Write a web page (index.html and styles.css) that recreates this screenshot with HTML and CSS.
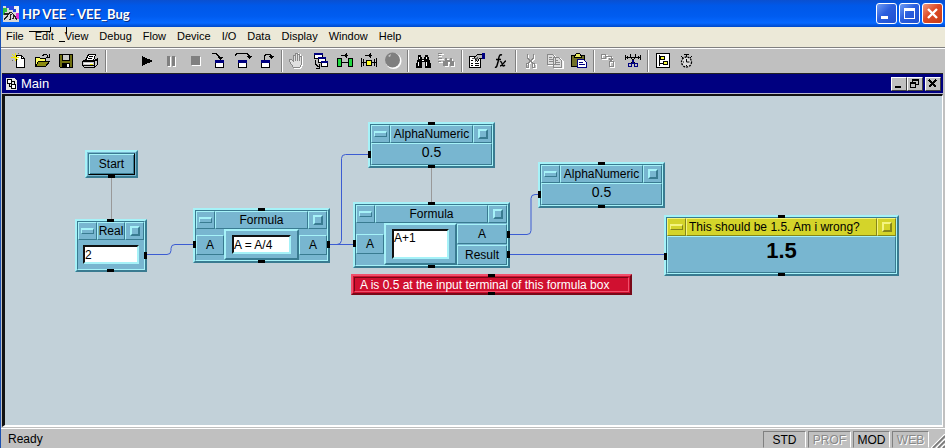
FILE: index.html
```html
<!DOCTYPE html>
<html lang="en">
<head>
<meta charset="utf-8">
<title>HP VEE - VEE_Bug</title>
<link rel="stylesheet" href="styles.css">
</head>
<body>
<div class="app">
  <header class="titlebar">
    <svg class="app-icon" width="16" height="16" viewBox="0 0 16 16" shape-rendering="crispEdges" aria-hidden="true">
      <path fill="#d8d8d8" d="M0 0h16v16H0z"/><path fill="#30c040" d="M0 2h4v4H2v3H0z"/><path fill="#2848e0" d="M3 0h8v3h2v3h-3V4H6V2H3z"/><path fill="#f0f0f0" d="M11 0h5v7h-3V3h-2z"/><path fill="#e030d0" d="M13 7h3v6h-3z"/>
      <path fill="none" stroke="#222" stroke-width="1.2" d="M1 14l4-5 3-3 3 3 3 5M1 8h4l3-2M8 8l-1 6M11 9l-1 4"/>
    </svg>
    <h1>HP VEE - VEE_Bug</h1>
    <div class="window-buttons">
      <button type="button" aria-label="Minimize"><svg width="17" height="17" viewBox="0 0 17 17"><path fill="#fff" d="M3 11h7v3H3z"/></svg></button>
      <button type="button" aria-label="Maximize"><svg width="17" height="17" viewBox="0 0 17 17"><path fill="#fff" fill-rule="evenodd" d="M3 3h11v11H3zM4 6v7h9V6z"/></svg></button>
      <button type="button" class="close" aria-label="Close"><svg width="17" height="17" viewBox="0 0 17 17"><path stroke="#fff" stroke-width="2.4" d="M4 4l9 9M13 4l-9 9"/></svg></button>
    </div>
  </header>

  <nav class="menu">
    <a href="#">File</a><a href="#">Edit</a><a href="#">View</a><a href="#">Debug</a><a href="#">Flow</a><a href="#">Device</a><a href="#">I/O</a><a href="#">Data</a><a href="#">Display</a><a href="#">Window</a><a href="#">Help</a>
    <svg class="menu-marks" width="40" height="16" viewBox="0 0 40 16" shape-rendering="crispEdges" aria-hidden="true"><path fill="none" stroke="#000" d="M0 4.500h21M21.500 0v5M30 14.500h6M37.500 0v7"/></svg>
  </nav>

  <div class="toolbar" role="toolbar" aria-label="Main tools">
    <div class="group">
      <button type="button" aria-label="New"><svg viewBox="0 0 18 18"><path fill="#fff" stroke="#000" d="M7.500 3.500h5l3 3v9h-8z"/><path fill="none" stroke="#000" d="M12.500 3.500v3h3"/><path stroke="#f0e800" d="M6.500 1v8M2 5.500h8M3 2l6 6"/><path stroke="#666" d="M4 8l-1 1M9 2l1-1"/></svg></button>
      <button type="button" aria-label="Open"><svg viewBox="0 0 18 18"><path fill="#ffff60" stroke="#000" d="M2.500 14.500v-9h4l1 1h5v3"/><path fill="#8a8a10" stroke="#000" d="M2.500 14.500l3-5h11l-4 5z"/><path fill="none" stroke="#000" d="M9.500 4.500l1-2h3l2 3M16.500 2v4M13 5.500h3"/></svg></button>
      <button type="button" aria-label="Save"><svg viewBox="0 0 18 18"><path fill="#707010" stroke="#000" d="M2.500 2.500h13v13h-12l-1-1z"/><path fill="#c8c8c8" stroke="#000" d="M5.500 2.500h7v6h-7z"/><path fill="#000" d="M5 11h8v5H5z"/><path fill="#fff" d="M10 12h2v3h-2z"/></svg></button>
      <button type="button" aria-label="Print"><svg viewBox="0 0 18 18"><path fill="#fff" stroke="#000" d="M4.500 8.500l3-6h7l-2 6z"/><path stroke="#000" d="M8 4.500h4M7 6.500h4"/><path fill="#c8c8c8" stroke="#000" d="M1.500 9.500l2-1h10l3-2v6l-3 3h-10l-2-2zM1.500 9.500h12v5M13.500 9.500l3-2"/><path fill="#fff" d="M3 11h9v1H3z"/><path fill="#e0d800" d="M9 12h3v1H9z"/><path stroke="#000" d="M2 13.500h11"/></svg></button>
    </div>
    <i class="sep first"></i>
    <div class="group">
      <button type="button" aria-label="Run"><svg viewBox="0 0 18 18"><path fill="#000" d="M4 4v10l11-5z"/></svg></button>
      <button type="button" aria-label="Pause"><svg viewBox="0 0 18 18"><path fill="#fff" d="M6 5h3v10H6zM11 5h3v10h-3z"/><path fill="#808080" d="M5 4h3v10H5zM10 4h3v10h-3z"/></svg></button>
      <button type="button" aria-label="Stop"><svg viewBox="0 0 18 18"><path fill="#fff" d="M6 5h9v9H6z"/><path fill="#808080" d="M5 4h9v9H5z"/></svg></button>
      <button type="button" aria-label="Step into"><svg viewBox="0 0 18 18"><path fill="none" stroke="#000" d="M2 1.500h4l4 4v1"/><path fill="#000" d="M7 5h6l-3 3z"/><path fill="#fff" stroke="#000" d="M5.500 8.500h8v7h-8z"/><path fill="#000080" d="M5 8h9v3H5z"/></svg></button>
      <button type="button" aria-label="Step over"><svg viewBox="0 0 18 18"><path fill="none" stroke="#000" d="M1 3.500l2-2h10l2 2v2"/><path fill="#000" d="M12 4h6l-3 3z"/><path fill="#fff" stroke="#000" d="M4.500 8.500h8v7h-8z"/><path fill="#000080" d="M4 8h9v3H4z"/></svg></button>
      <button type="button" aria-label="Step out"><svg viewBox="0 0 18 18"><path fill="none" stroke="#000" d="M6.500 8v-4l2-2h3l2 2v2"/><path fill="#000" d="M10 4h7l-3.500 3z"/><path fill="#fff" stroke="#000" d="M3.500 8.500h8v7h-8z"/><path fill="#000080" d="M3 8h9v3H3z"/></svg></button>
    </div>
    <i class="sep"></i>
    <div class="group">
      <button type="button" aria-label="Pan"><svg viewBox="0 0 18 18"><path fill="#e8e8e8" stroke="#fff" d="M6.500 16.500l-4-6v-2h2l2 2v-7h2v-2h2v1h2v2h2v8l-2 4z"/><path fill="#e0e0e0" stroke="#888" d="M5.500 15.500l-4-6v-2h2l2 2v-6h2v-2h2v1h2v2h2v8l-2 3zM7.500 3v6M9.500 2v7M11.500 4v5"/></svg></button>
      <button type="button" aria-label="Show windows"><svg viewBox="0 0 18 18"><path fill="#fff" stroke="#000" d="M2.500 1.500h8v5h-8zM6.500 5.500h7v5h-7zM9.500 9.500h6v5h-6z"/><path fill="#000080" d="M2 1h9v2H2zM6 5h8v2H6zM9 9h7v2H9z"/><path fill="none" stroke="#000" d="M3.500 8v4l3 3M7.500 12v4H4"/></svg></button>
      <button type="button" aria-label="Data flow"><svg viewBox="0 0 18 18"><path fill="#20d840" stroke="#000" d="M1.500 6.500h4v8h-4zM12.500 6.500h4v8h-4z"/><path stroke="#000" d="M6 10.500h6M5 3.500h7M10.500 1v5M9.500 2v3"/></svg></button>
      <button type="button" aria-label="Execution flow"><svg viewBox="0 0 18 18"><path fill="none" stroke="#000" d="M1.500 6v9M16.500 6v9M1 10.500h2M15 10.500h2M3.500 7v7M14.500 7v7M4 10.500h10"/><path fill="#ffff20" stroke="#000" d="M6.500 8.500h5v5h-5z"/><path stroke="#000" d="M5 3.500h7M10.500 1v5M9.500 2v3"/></svg></button>
      <button type="button" aria-label="Profiler"><svg class="smooth" viewBox="0 0 18 18"><circle cx="9.500" cy="9" r="8" fill="#fff"/><circle cx="8.500" cy="8" r="7.500" fill="#808080"/><path fill="#ccc" d="M4 4l3-2-1 3z"/></svg></button>
    </div>
    <i class="sep"></i>
    <div class="group">
      <button type="button" aria-label="Find"><svg viewBox="0 0 18 18"><path fill="#000" d="M4 3h3v2h1v2h2V5h1V3h3v2h1v3h1v3h1v5h-6v-6H8v6H2v-5h1V8h1z"/><path fill="#fff" d="M5 5h1v2H5zM12 5h1v2h-1zM4 10h1v4H4zM12 10h1v4h-1zM8 8h2v1H8z"/></svg></button>
      <button type="button" aria-label="Find results"><svg viewBox="0 0 18 18"><path fill="none" stroke="#fff" d="M1 2.500h5M1 4.500h3M1 7.500h5M1 10.500h4"/><path fill="#fff" d="M8 7h3v2h1V7h3v3h2v5h-4v-3h-2v3H7v-4z"/><path stroke="#888" d="M0 1.500h4M0 3.500h3M0 6.500h4M0 9.500h3"/><path fill="#888" d="M7 6h2v2h3V6h2v3h2v5h-4v-4h-2v4H5V9h2z"/></svg></button>
    </div>
    <i class="sep"></i>
    <div class="group">
      <button type="button" aria-label="Properties"><svg viewBox="0 0 18 18"><path fill="#fff" stroke="#000" d="M1.500 4.500h11v11h-11z"/><path stroke="#000" d="M3 8.500h2M3 11.500h2M3 13.500h2M7 11.500h4M7 13.500h4"/><path fill="#b8b8b8" stroke="#000" d="M6.500 5.500l3-3h5v4h-3l-2 3z"/><path stroke="#555" d="M4 6.500h6M7 9.500l3-4"/><path fill="#000080" d="M14 1h3v6h-3z"/></svg></button>
      <button type="button" aria-label="Function browser"><svg class="smooth" viewBox="0 0 18 18"><path fill="none" stroke="#000" stroke-width="1.500" d="M3 15c2 1 2-2 3-5 1-5 1-8 4-7M4 7.500h5"/><path fill="none" stroke="#000" stroke-width="1.300" d="M8 10c2-2 2 4 3 4s1 0 2-1M14 9c-2 0-3 5-6 5"/></svg></button>
    </div>
    <i class="sep"></i>
    <div class="group">
      <button type="button" aria-label="Cut"><svg viewBox="0 0 18 18"><path fill="none" stroke="#fff" d="M6.500 3v4l5 5M12.500 3v4l-5 5M4.500 12.500h3v4h-3zM11.500 12.500h3v4h-3z"/><path fill="none" stroke="#888" d="M5.500 2v4l5 5M11.500 2v4l-5 5M4.500 11.500h2v4h-2zM10.500 11.500h2v4h-2z"/></svg></button>
      <button type="button" aria-label="Copy"><svg viewBox="0 0 18 18"><path fill="#eee" stroke="#fff" d="M2.500 3.500h6l3 3v7h-9zM8.500 6.500h6l3 3v7h-9z"/><path fill="#ddd" stroke="#888" d="M1.500 2.500h5l3 3v7h-8zM7.500 5.500h5l3 3v7h-8z"/><path stroke="#888" d="M3 5.500h3M3 7.500h4M3 9.500h4M9 8.500h3M9 10.500h5M9 12.500h5"/></svg></button>
      <button type="button" aria-label="Paste"><svg viewBox="0 0 18 18"><path fill="#707028" stroke="#000" d="M1.500 3.500h13v11h-13z"/><path fill="#e8e860" stroke="#000" d="M4.500 4.500l2-3h3l2 3v1h-7z"/><path fill="#fff" stroke="#000080" d="M7.500 7.500h6l3 3v5h-9z"/><path stroke="#000080" d="M9 10.500h4M9 12.500h6"/></svg></button>
    </div>
    <i class="sep"></i>
    <div class="group">
      <button type="button" aria-label="Connect"><svg viewBox="0 0 18 18"><path fill="none" stroke="#fff" d="M2.500 3.500h5v4h-5zM10.500 10.500h4v5h-4zM8 5.500h4v4"/><path fill="none" stroke="#888" d="M1.500 2.500h4v4h-4zM9.500 9.500h4v5h-4zM6 4.500h5.500v4M9 6.500l2 2 2-2"/></svg></button>
      <button type="button" aria-label="Delete line"><svg viewBox="0 0 18 18"><path fill="none" stroke="#000" d="M1 5.500h16M1.500 3v5M16.500 3v5M3.500 4v3M14.500 4v3M6.500 2v3l4 6M11.500 2v3l-4 6"/><path fill="none" stroke="#000080" stroke-width="1.400" d="M4.500 11.500h3v3h-3zM10.500 11.500h3v3h-3zM9 8v4"/></svg></button>
    </div>
    <i class="sep"></i>
    <div class="group">
      <button type="button" aria-label="Program explorer"><svg viewBox="0 0 18 18"><path fill="#fff" stroke="#000" d="M2.500 1.500h13v14h-13z"/><path fill="none" stroke="#000" d="M5.500 3v10.500M5 6.500h3M5 11.500h4"/><path fill="#ffff40" stroke="#000" d="M6.500 4.500h4v3h-4zM9.500 9.500h4v3h-4z"/></svg></button>
      <button type="button" aria-label="Timer"><svg class="smooth" viewBox="0 0 18 18"><circle cx="8.500" cy="10" r="5" fill="#ddd" stroke="#000" stroke-width="1.300" stroke-dasharray="2 1"/><path fill="none" stroke="#000" d="M6 2.500h5M8.500 2v3M3 4l2 2M14 4l-2 2M8.500 7v3h3M5 10h1M8.500 13v1"/></svg></button>
    </div>
  </div>

  <main class="mdi">
    <div class="mdi-title">
      <svg width="12" height="14" viewBox="0 0 12 14" shape-rendering="crispEdges" aria-hidden="true"><path fill="#e4e4e4" d="M0 1h8l3 3v9H0z"/><path fill="#fff" stroke="#000" d="M1.500 2.500h4v4h-4zM5.500 7.500h4v4h-4z"/><path fill="none" stroke="#000" d="M6 4.500h2.500V7M3.500 7v2.500H5"/></svg>
      <h2>Main</h2>
      <div class="mdi-buttons">
        <button type="button" aria-label="Minimize Main"><svg viewBox="0 0 13 12"><path fill="#000" d="M3 8h6v2H3z"/></svg></button>
        <button type="button" aria-label="Restore Main"><svg viewBox="0 0 13 12"><path fill="none" stroke="#000" d="M4.500 4V1.500h6v5H8M2.500 5.500h5v4h-5z"/><path fill="#000" d="M4 1h7v2H4zM2 4h6v2H2z"/></svg></button>
        <button type="button" class="apart" aria-label="Close Main"><svg viewBox="0 0 13 12"><path stroke="#000" stroke-width="1.600" d="M3 2l7 7M10 2l-7 7"/></svg></button>
      </div>
    </div>

    <div class="canvas">
      <svg class="wires" width="900" height="300" viewBox="5 96 900 300" aria-hidden="true">
        <path class="control" d="M111.500 176v45M431.500 166v38"/>
        <path class="data" d="M147 254.500h20q4 0 4-4v-2q0-4 4-4h18M330 244.500h24M334 244.500h3q4 0 4.500-4v-82q0-4 4-4h23M510 234.500h17q4 0 4-4v-32q0-4 4-4h4M510 254.500h155"/>
      </svg>

      <section class="node start"><button type="button">Start</button><i class="pin bottom"></i></section>

      <section class="node real">
        <div class="frame">
          <header><button type="button" class="min" aria-label="Object menu"></button><h3>Real</h3><button type="button" class="max" aria-label="Minimize Real"></button></header>
          <div class="body"><input type="text" value="2" aria-label="Real value"></div>
        </div>
        <i class="pin top"></i><i class="pin bottom"></i><i class="pin right low"></i>
      </section>

      <section class="node formula one">
        <div class="frame">
          <header><button type="button" class="min" aria-label="Object menu"></button><h3>Formula</h3><button type="button" class="max" aria-label="Minimize Formula"></button></header>
          <div class="body">
            <div class="terms"><span>A</span></div>
            <div class="panel"><input type="text" value="A = A/4" aria-label="Formula"></div>
            <div class="terms"><span>A</span></div>
          </div>
        </div>
        <i class="pin top"></i><i class="pin bottom"></i><i class="pin left low"></i><i class="pin right low"></i>
      </section>

      <section class="node alpha first">
        <div class="frame">
          <header><button type="button" class="min" aria-label="Object menu"></button><h3>AlphaNumeric</h3><button type="button" class="max" aria-label="Minimize display"></button></header>
          <div class="body"><output>0.5</output></div>
        </div>
        <i class="pin top"></i><i class="pin bottom"></i><i class="pin left"></i>
      </section>

      <section class="node formula two">
        <div class="frame">
          <header><button type="button" class="min" aria-label="Object menu"></button><h3>Formula</h3><button type="button" class="max" aria-label="Minimize Formula"></button></header>
          <div class="body">
            <div class="terms"><span>A</span></div>
            <div class="panel"><textarea aria-label="Formula">A+1</textarea></div>
            <div class="terms outputs"><span>A</span><span>Result</span></div>
          </div>
        </div>
        <i class="pin top"></i><i class="pin bottom"></i><i class="pin left mid"></i><i class="pin right"></i><i class="pin right lower"></i>
      </section>

      <section class="node alpha second">
        <div class="frame">
          <header><button type="button" class="min" aria-label="Object menu"></button><h3>AlphaNumeric</h3><button type="button" class="max" aria-label="Minimize display"></button></header>
          <div class="body"><output>0.5</output></div>
        </div>
        <i class="pin top"></i><i class="pin bottom"></i><i class="pin left"></i>
      </section>

      <section class="node wrong">
        <div class="frame">
          <header><button type="button" class="min" aria-label="Object menu"></button><h3>This should be 1.5. Am i wrong?</h3><button type="button" class="max" aria-label="Minimize display"></button></header>
          <div class="body"><output>1.5</output></div>
        </div>
        <i class="pin top"></i><i class="pin bottom"></i><i class="pin left mid"></i>
      </section>

      <section class="node note"><p>A is 0.5 at the input terminal of this formula box</p><i class="pin top"></i><i class="pin bottom"></i></section>
    </div>
  </main>

  <footer class="status">
    <span class="message">Ready</span>
    <span class="cell wide">STD</span><span class="cell wide off">PROF</span><span class="cell">MOD</span><span class="cell off">WEB</span>
    <svg width="14" height="14" viewBox="0 0 14 14" aria-hidden="true"><path stroke="#fff" stroke-width="1.200" d="M0 14L14 0M5 14l9-9M10 14l4-4"/><path stroke="#777" stroke-width="1.600" d="M2 14L14 2M7 14l7-7M12 14l2-2"/></svg>
  </footer>
</div>
</body>
</html>
```
FILE: styles.css
```css
* { box-sizing: border-box; }

body {
  margin: 0;
  font: 12px/14px "Liberation Sans", Arial, sans-serif;
  color: #000;
}

h1, h2, h3, p { margin: 0; font-weight: normal; }

button { margin: 0; padding: 0; border: 0; background: none; font: inherit; color: inherit; }

.app {
  display: flex;
  flex-direction: column;
  min-height: 100vh;
  background: #c0c0c0;
  border-left: 1px solid #1c50b0;
}

/* Window title */
.titlebar {
  display: flex;
  align-items: center;
  height: 27px;
  padding: 0 2px;
  gap: 3px;
  background: linear-gradient(#0a50d0 0, #0058e8 20%, #005cf0 60%, #0668ff 85%, #0048c8 100%);
}

.titlebar h1 {
  flex: 1;
  font: bold 13px/20px Lato, "Liberation Sans", sans-serif;
  color: #fff;
  text-shadow: 1px 1px #0a2c80;
}

.window-buttons { display: flex; gap: 2px; }

.window-buttons button {
  display: flex;
  align-items: center;
  justify-content: center;
  width: 21px;
  height: 21px;
  border: 1px solid #fff;
  border-radius: 3px;
  background: linear-gradient(135deg, #6f9cf4, #2a5ede 45%, #2050d0);
}

.window-buttons .close { background: linear-gradient(135deg, #f09a80, #dd4a26 45%, #c83c14); }

/* Menu */
.menu {
  position: relative;
  display: flex;
  gap: 11px;
  height: 20px;
  padding: 2px 5px;
  background: #ece9d8;
  font-size: 11px;
}

.menu a { color: #000; text-decoration: none; }

.menu-marks { position: absolute; left: 28px; top: 0; }

/* Toolbar */
.toolbar {
  display: flex;
  align-items: center;
  height: 26px;
  padding-left: 5px;
  border-top: 1px solid #808080;
  box-shadow: inset 0 1px #fff;
}

.group { display: flex; }

.group button { display: flex; justify-content: center; width: 24px; }

.group svg { width: 18px; height: 18px; shape-rendering: crispEdges; }

.group .smooth { shape-rendering: auto; }

.sep {
  width: 2px;
  height: 22px;
  margin: 0 2px;
  border-left: 1px solid #808080;
  border-right: 1px solid #fff;
}

.sep.first { margin: 0 28px 0 3px; }

/* Document window */
.mdi {
  flex: 1;
  display: flex;
  flex-direction: column;
  padding: 0 2px 1px 1px;
}

.mdi-title {
  display: flex;
  align-items: center;
  height: 21px;
  padding: 0 2px 0 4px;
  gap: 3px;
  border-top: 1px solid #222;
  border-bottom: 1px solid #b8b8d0;
  background: #000080;
  color: #fff;
}

.mdi-title h2 { flex: 1; font-size: 13px; line-height: 18px; }

.mdi-buttons { display: flex; }

.mdi-buttons button {
  width: 16px;
  height: 14px;
  border: 1px solid;
  border-color: #fff #404040 #404040 #fff;
  background: #c0c0c0;
}

.mdi-buttons .apart { margin-left: 2px; }

.mdi-buttons svg { display: block; width: 13px; height: 12px; shape-rendering: crispEdges; }

.canvas {
  position: relative;
  flex: 1;
  border: solid;
  border-width: 2px 1px 2px 3px;
  border-color: #111 #fff #fff #111;
  background: #c2d1d9;
}

.wires { position: absolute; left: 0; top: 0; fill: none; stroke-width: 1; }

.control { stroke: #999; }

.data { stroke: #3c5cd2; }

/* Nodes */
.node {
  --face: #78b6d0;
  --light: #a6f2f8;
  --dark: #397b91;
  position: absolute;
  display: flex;
  border: 2px solid;
  border-color: var(--light) var(--dark) var(--dark) var(--light);
  background: var(--face);
}

.frame {
  flex: 1;
  display: flex;
  flex-direction: column;
  border: 1px solid;
  border-color: var(--dark) var(--light) var(--light) var(--dark);
}

.frame header { display: flex; height: 18px; background: var(--face); }

.frame header > * {
  border: 1px solid;
  border-color: var(--light) var(--dark) var(--dark) var(--light);
}

.frame h3 {
  flex: 1;
  font-size: 12px;
  line-height: 16px;
  text-align: center;
  white-space: nowrap;
}

.min, .max { display: flex; align-items: center; justify-content: center; width: 19px; }

.min::before, .max::before {
  content: "";
  width: 11px;
  height: 3px;
  border: solid;
  border-width: 2px 1px 1px 1px;
  border-color: var(--light) var(--dark) var(--dark) var(--light);
}

.max::before { width: 6px; height: 6px; border-width: 2px; }

.body { flex: 1; display: flex; align-items: center; justify-content: center; }

.alpha .body, .wrong .body {
  border: 1px solid;
  border-color: var(--light) var(--dark) var(--dark) var(--light);
}

.alpha .body { align-items: flex-start; }

.node input, .node textarea {
  display: block;
  height: 19px;
  padding: 0;
  border: 2px solid;
  border-color: #111 var(--light) var(--light) #111;
  border-radius: 0;
  background: #fff;
  color: #000;
  font: 12px/14px "Liberation Sans", Arial, sans-serif;
  resize: none;
  overflow: hidden;
}

.node output { font-size: 14px; line-height: 16px; }

.pin { position: absolute; background: #000; }

.pin.top, .pin.bottom { left: calc(50% - 4px); width: 7px; height: 3px; }

.pin.top { top: -2px; }

.pin.bottom { bottom: -2px; }

.pin.left, .pin.right { top: 27px; width: 3px; height: 7px; }

.pin.left { left: -2px; }

.pin.right { right: -2px; }

.pin.low { top: 31px; }

.pin.mid { top: 36px; }

.pin.lower { top: 47px; }

.start { left: 80px; top: 54px; width: 53px; height: 28px; padding: 1px; }

.start button {
  flex: 1;
  border: 1px solid;
  border-color: var(--dark) #000 #000 var(--dark);
  box-shadow: inset 1px 1px var(--light), inset -1px -1px var(--dark);
}

.real { left: 70px; top: 123px; width: 72px; height: 53px; }

.real input { width: 56px; }

.formula .body { align-items: stretch; }

.formula.one { left: 188px; top: 112px; width: 137px; height: 55px; }

.formula.two { left: 348px; top: 106px; width: 157px; height: 66px; }

.terms { display: flex; flex-direction: column; justify-content: center; width: 28px; }

.terms span {
  height: 20px;
  line-height: 18px;
  text-align: center;
  border: 1px solid;
  border-color: var(--light) var(--dark) var(--dark) var(--light);
}

.terms.outputs { width: 50px; gap: 1px; }

.panel {
  flex: 1;
  display: flex;
  align-items: center;
  padding: 0 6px;
  border: 2px solid;
  border-color: var(--light) var(--dark) var(--dark) var(--light);
}

.panel input, .panel textarea { width: 100%; }

.panel textarea { height: 30px; }

.alpha { width: 127px; height: 46px; }

.alpha.first { left: 363px; top: 26px; }

.alpha.second { left: 533px; top: 66px; }

.wrong { left: 659px; top: 119px; width: 235px; height: 61px; }

.wrong header { --face: #d4d42a; --light: #f4f480; --dark: #85851a; }

.wrong h3 { padding-left: 2px; text-align: left; }

.wrong .body { align-items: flex-start; padding-top: 2px; }

.wrong output { font-size: 22px; line-height: 24px; font-weight: bold; }

.note {
  --face: #d01030;
  --light: #f0506c;
  --dark: #780818;
  left: 346px;
  top: 178px;
  width: 281px;
  height: 21px;
  padding: 1px;
}

.note p {
  flex: 1;
  padding-left: 5px;
  border: 1px solid;
  border-color: var(--dark) var(--light) var(--light) var(--dark);
  color: #fff;
  line-height: 14px;
  white-space: nowrap;
}

/* Status bar */
.status {
  display: flex;
  align-items: flex-end;
  gap: 2px;
  height: 20px;
  border-top: 1px solid #fff;
}

.message { flex: 1; padding: 0 7px; line-height: 17px; }

.cell {
  width: 37px;
  height: 17px;
  line-height: 17px;
  text-align: center;
  border: 1px solid;
  border-color: #808080 #fff #c0c0c0 #808080;
}

.cell.wide { width: 43px; }

.cell.off { color: #888; text-shadow: 1px 1px #fff; }
```
